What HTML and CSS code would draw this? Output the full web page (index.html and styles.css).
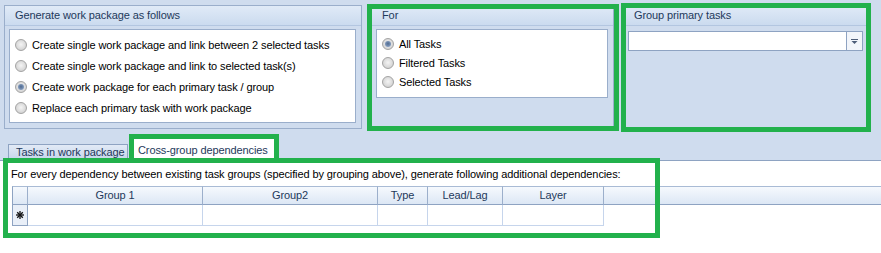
FILE: index.html
```html
<!DOCTYPE html>
<html lang="en">
<head>
    <meta charset="UTF-8">
    <title>Generate work package</title>
    <link rel="stylesheet" href="styles.css">
</head>
<body>
<div class="form">
    <div class="groups">
        <div class="group group_mode">
            <div class="group_head">Generate work package as follows</div>
            <div class="group_body">
                <div class="radio_list list_mode">
                    <div class="radio_row"><span class="radio"></span>Create single work package and link between 2 selected tasks</div>
                    <div class="radio_row"><span class="radio"></span>Create single work package and link to selected task(s)</div>
                    <div class="radio_row"><span class="radio on"></span>Create work package for each primary task / group</div>
                    <div class="radio_row"><span class="radio"></span>Replace each primary task with work package</div>
                </div>
            </div>
        </div>

        <div class="group group_for">
            <div class="group_head">For</div>
            <div class="group_body">
                <div class="radio_list list_for">
                    <div class="radio_row"><span class="radio on"></span>All Tasks</div>
                    <div class="radio_row"><span class="radio"></span>Filtered Tasks</div>
                    <div class="radio_row"><span class="radio"></span>Selected Tasks</div>
                </div>
            </div>
        </div>

        <div class="group group_primary">
            <div class="group_head">Group primary tasks</div>
            <div class="group_body combo_body">
                <div class="combo">
                    <div class="combo_text"></div>
                    <div class="combo_btn">
                        <svg width="7" height="5" viewBox="0 0 7 5">
                            <rect x="0" y="0" width="7" height="1" fill="#4d5d78"/>
                            <polygon points="0.5,2 6.5,2 3.5,5" fill="#4d5d78"/>
                        </svg>
                    </div>
                </div>
            </div>
        </div>
    </div>

    <div class="tabs">
        <div class="tab">Tasks in work package</div>
        <div class="tab active">Cross-group dependencies</div>
    </div>

    <div class="panel">
        <div class="panel_text">For every dependency between existing task groups (specified by grouping above), generate following additional dependencies:</div>
        <div class="grid">
            <div class="hcell indicator"></div>
            <div class="hcell">Group 1</div>
            <div class="hcell">Group2</div>
            <div class="hcell">Type</div>
            <div class="hcell">Lead/Lag</div>
            <div class="hcell">Layer</div>
            <div class="hcell filler"></div>

            <div class="cell indicator">
                <svg width="8" height="8" viewBox="0 0 8 8">
                    <g stroke="#111" stroke-width="1.3">
                        <line x1="4" y1="0" x2="4" y2="8"/>
                        <line x1="0" y1="4" x2="8" y2="4"/>
                        <line x1="1.2" y1="1.2" x2="6.8" y2="6.8"/>
                        <line x1="6.8" y1="1.2" x2="1.2" y2="6.8"/>
                    </g>
                </svg>
            </div>
            <div class="cell"></div>
            <div class="cell"></div>
            <div class="cell"></div>
            <div class="cell"></div>
            <div class="cell"></div>
            <div class="cell blank"></div>
        </div>
    </div>

    <!-- highlight frames drawn over the screenshot -->
    <div class="mark mark_for"></div>
    <div class="mark mark_primary"></div>
    <div class="mark mark_tab"></div>
    <div class="mark mark_panel"></div>
</div>
</body>
</html>
```

FILE: styles.css
```css
html, body {
    margin: 0;
    height: 100%;
}

body {
    font-family: "Liberation Sans", Arial, sans-serif;
    font-size: 11px;
    letter-spacing: -0.1px;
    color: #000;
    background: #ffffff;
    overflow: hidden;
}

.form {
    position: relative;
    width: 881px;
    height: 253px;
    background-color: #cfdcee;
    display: flex;
    flex-direction: column;
}

.groups {
    display: flex;
    gap: 9px;
    padding: 5px 0 0 4px;
    height: 124px;
}

.group {
    box-sizing: border-box;
    height: 124px;
    border: 1px solid #9aaecb;
    display: flex;
    flex-direction: column;
}

.group_mode {
    width: 358px;
}

.group_for {
    width: 243px;
}

.group_primary {
    width: 246px;
}

.group_head {
    height: 19px;
    line-height: 19px;
    padding-left: 10px;
    color: #1e395b;
    background: linear-gradient(#e0eaf7, #cbdbef);
    border-bottom: 1px solid #b3c6e0;
}

.group_body {
    padding: 3px 5px 0 4px;
}

.radio_list {
    box-sizing: border-box;
    background: #ffffff;
    border: 1px solid #9aaecb;
    padding: 4px 0 0 5px;
}

.list_mode {
    height: 94px;
}

.list_mode .radio_row {
    height: 21px;
}

.list_for {
    height: 69px;
}

.list_for .radio_row {
    height: 19px;
}

.radio_row {
    display: flex;
    align-items: center;
    gap: 5px;
    white-space: nowrap;
}

.radio {
    box-sizing: border-box;
    position: relative;
    width: 12px;
    height: 12px;
    border-radius: 50%;
    border: 1px solid #a3a3a3;
    background: radial-gradient(circle at 50% 45%, #f4f4f4 0, #dcdcdc 55%, #c6c6c6 100%);
}

.radio.on::after {
    content: "";
    position: absolute;
    left: 2px;
    top: 2px;
    width: 6px;
    height: 6px;
    border-radius: 50%;
    background: radial-gradient(circle at 50% 45%, #4f6a8f 0, #7d95b8 60%, #a9bbd6 100%);
}

.combo_body {
    padding-top: 5px;
}

.combo {
    display: flex;
    height: 20px;
    box-sizing: border-box;
    border: 1px solid #8ea3c2;
    background: #ffffff;
}

.combo_text {
    flex: 1;
}

.combo_btn {
    width: 15px;
    border-left: 1px solid #8ea3c2;
    background: #f2f5fa;
    display: flex;
    align-items: center;
    justify-content: center;
}

.tabs {
    display: flex;
    align-items: flex-end;
    gap: 1px;
    margin-top: 9px;
    padding-left: 8px;
    height: 22px;
    position: relative;
    z-index: 1;
}

.tab {
    box-sizing: border-box;
    width: 120px;
    height: 16px;
    line-height: 14px;
    padding: 0 0 0 7px;
    color: #1e395b;
    background: linear-gradient(#e2eaf6, #c5d5eb);
    border: 1px solid #8ea3c2;
    border-bottom: none;
    white-space: nowrap;
    overflow: hidden;
}

.tab.active {
    width: 150px;
    height: 23px;
    line-height: 22px;
    padding: 0 0 0 8px;
    margin-bottom: -1px;
    background: #ffffff;
}

.panel {
    flex: 1;
    background: #ffffff;
    border-top: 1px solid #8ea3c2;
    padding: 6px 0 0 11px;
}

.panel_text {
    line-height: 14px;
    white-space: nowrap;
}

.grid {
    display: grid;
    grid-template-columns: 16px 175px 175px 50px 75px 101px 1fr;
    grid-template-rows: 19px 21px;
    margin-top: 5px;
    margin-left: 1px;
}

.hcell {
    box-sizing: border-box;
    background: linear-gradient(#f6f9fd, #dce7f5);
    border-top: 1px solid #a9bbd5;
    border-bottom: 1px solid #8ea3c2;
    border-right: 1px solid #9cafcb;
    color: #1e395b;
    text-align: center;
    line-height: 17px;
}

.hcell.indicator {
    border-left: 1px solid #8ea3c2;
}

.hcell.filler {
    border-right: none;
}

.cell {
    box-sizing: border-box;
    border-right: 1px solid #c6d5ec;
    border-bottom: 1px solid #c6d5ec;
}

.cell.indicator {
    background: #e9eff8;
    border-left: 1px solid #8ea3c2;
    border-right: 1px solid #8ea3c2;
    border-bottom: 1px solid #8ea3c2;
    display: flex;
    align-items: center;
    justify-content: center;
}

.cell.blank {
    border: none;
}

.mark {
    position: absolute;
    box-sizing: border-box;
    border: 5px solid #22b14c;
    z-index: 5;
}

.mark_for {
    left: 367px;
    top: 4px;
    width: 252px;
    height: 127px;
}

.mark_primary {
    left: 621px;
    top: 3px;
    width: 250px;
    height: 129px;
}

.mark_tab {
    left: 129px;
    top: 134px;
    width: 150px;
    height: 29px;
}

.mark_panel {
    left: 3px;
    top: 158px;
    width: 657px;
    height: 80px;
}
```
